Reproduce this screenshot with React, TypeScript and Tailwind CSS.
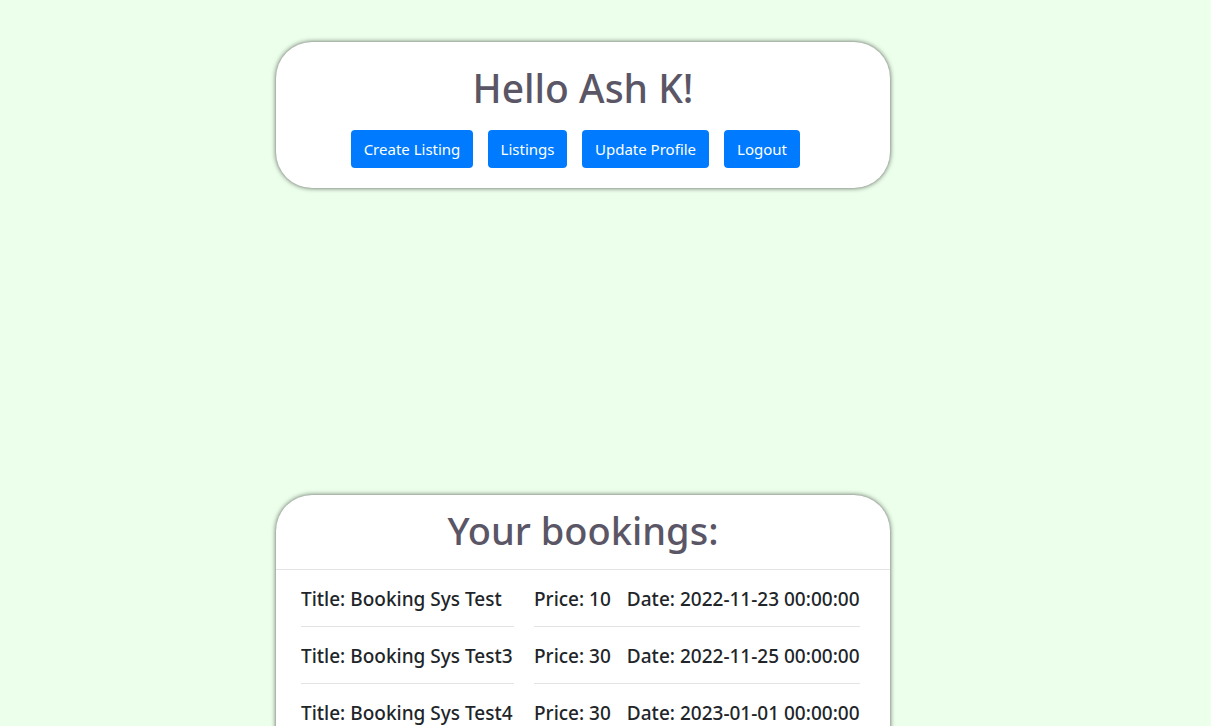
const actions = [
  { label: "Create Listing", width: "w-[122px]" },
  { label: "Listings", width: "w-[79px]" },
  { label: "Update Profile", width: "w-[127px]" },
  { label: "Logout", width: "w-[76px]" },
];

const bookings = [
  { title: "Booking Sys Test", price: 10, date: "2022-11-23 00:00:00" },
  { title: "Booking Sys Test3", price: 30, date: "2022-11-25 00:00:00" },
  { title: "Booking Sys Test4", price: 30, date: "2023-01-01 00:00:00" },
];

const card =
  "w-full max-w-[614px] rounded-[36px] bg-white shadow-[0_0_5px_rgba(0,0,0,0.65)]";

export default function App() {
  return (
    <main className="flex min-h-screen flex-col items-center gap-[307px] bg-[#ecffeb] pt-[42px] pr-[45px] font-['Noto_Sans','Open_Sans',sans-serif] text-[#212529]">
      <section className={`${card} pt-[22px] pb-5`}>
        <h1 className="text-center text-[39px] leading-[48px] font-medium text-[#5a5666]">
          Hello Ash K!
        </h1>
        <nav className="mt-[18px] flex flex-wrap justify-center gap-[15px] pr-[15px]">
          {actions.map(({ label, width }) => (
            <button
              key={label}
              type="button"
              className={`${width} h-[38px] cursor-pointer rounded bg-[#007bff] text-[15px] leading-6 whitespace-nowrap text-white`}
            >
              {label}
            </button>
          ))}
        </nav>
      </section>

      <section className={`${card} pb-8`}>
        <h2 className="border-b border-[#e3e3e5] pt-[11px] pb-[15px] text-center text-[38px] leading-[48px] font-medium text-[#5a5666]">
          Your bookings:
        </h2>
        <ul className="pr-[30px] pl-[25px]">
          {bookings.map(({ title, price, date }) => (
            <li
              key={title}
              className="grid grid-cols-[213fr_326fr] gap-x-5 text-[19px] leading-6 font-medium whitespace-nowrap"
            >
              <h3 className="border-b border-[#e3e3e5] pt-[17px] pb-[15px]">
                Title: {title}
              </h3>
              <p className="flex gap-4 border-b border-[#e3e3e5] pt-[17px] pb-[15px]">
                <span>Price: {price}</span>
                <span>Date: {date}</span>
              </p>
            </li>
          ))}
        </ul>
      </section>
    </main>
  );
}
